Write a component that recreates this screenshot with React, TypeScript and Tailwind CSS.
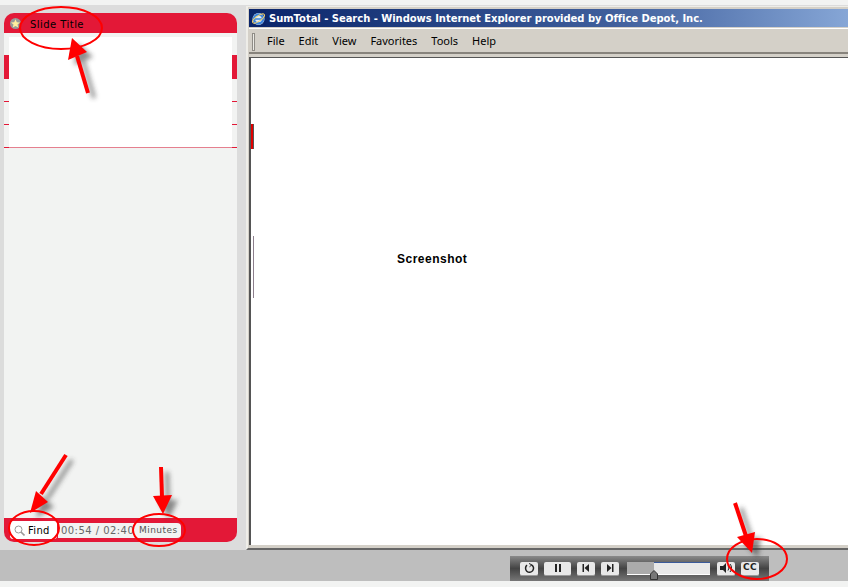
const arrows = [
  { line: '88,93 77,56', head: '72,38 68,60 87,52' },
  { line: '66,455 41,494', head: '30,513 36,491 48,502' },
  { line: '161,467 162,497', head: '163,514 153,496 172,495' },
  { line: '735,503 746,536', head: '752,553 737,537 755,532' },
];

function Annotations() {
  return (
    <svg className="absolute left-0 top-0 pointer-events-none" width="848" height="587">
      <defs>
        <filter id="soft" x="-50%" y="-50%" width="200%" height="200%">
          <feGaussianBlur stdDeviation="2.5" />
        </filter>
      </defs>
      {arrows.map((a) => (
        <g key={a.line} transform="translate(6 5)" filter="url(#soft)" opacity="0.55">
          <polyline points={a.line} stroke="#333" strokeWidth="4" fill="none" />
          <polygon points={a.head} fill="#333" />
        </g>
      ))}
      {arrows.map((a) => (
        <g key={a.head}>
          <polyline points={a.line} stroke="#ff0000" strokeWidth="4" fill="none" />
          <polygon points={a.head} fill="#ff0000" />
        </g>
      ))}
      <g fill="none" stroke="#ff0000" strokeWidth="2">
        <ellipse cx="61" cy="28" rx="41" ry="21" />
        <ellipse cx="34" cy="528" rx="25" ry="17" />
        <ellipse cx="159" cy="530" rx="26" ry="16" />
        <ellipse cx="757" cy="559" rx="30" ry="20" />
      </g>
    </svg>
  );
}

function PlayerButton({ w, children }: { w: string; children: React.ReactNode }) {
  return (
    <div className={`${w} h-[14px] rounded-[2px] bg-[#e8e8e8] border-b border-[#999] flex items-center justify-center`}>
      {children}
    </div>
  );
}

function EdgeMark({ top, h }: { top: string; h: string }) {
  return (
    <div className={`absolute left-0 right-0 ${top} ${h} flex justify-between`}>
      <div className="w-[5px] bg-[#e31837]" />
      <div className="w-[5px] bg-[#e31837]" />
    </div>
  );
}

function SidePanel() {
  return (
    <div className="w-[233px] ml-1 mt-2 flex flex-col font-['DejaVu_Sans',sans-serif]">
      <div className="h-5 bg-[#e31837] rounded-t-[10px] flex items-center pl-[6px] gap-[9px]">
        <svg width="11" height="11" viewBox="0 0 11 11">
          <circle cx="5.5" cy="5.5" r="5.5" fill="#999" />
          <polygon points="5.5,1.2 6.8,4.2 10,4.5 7.5,6.5 8.3,9.6 5.5,8 2.7,9.6 3.5,6.5 1,4.5 4.2,4.2" fill="#ffef9e" />
        </svg>
        <span className="text-[10px] tracking-[0.45px] text-black pt-[3px]">Slide Title</span>
      </div>
      <div className="h-[115px] bg-[#f2f3f2] flex flex-col pt-1 relative">
        <div className="mx-[5px] flex-1 bg-white" />
        <EdgeMark top="top-[22px]" h="h-6" />
        <EdgeMark top="top-[68px]" h="h-px" />
        <EdgeMark top="top-[91px]" h="h-px" />
        <div className="h-px bg-[#e5808f] flex justify-between">
          <div className="w-[5px] bg-[#e31837]" />
          <div className="w-[5px] bg-[#e31837]" />
        </div>
      </div>
      <div className="flex-1 bg-[#f2f3f2]" />
      <div className="h-6 bg-[#e31837] rounded-b-[10px] flex items-center pl-[6px]">
        <div className="w-[47px] h-[18px] bg-white rounded-[3px] flex items-center pl-1 gap-[3px]">
          <svg width="11" height="11" viewBox="0 0 11 11" fill="none" stroke="#999" strokeWidth="1">
            <circle cx="4.5" cy="4.5" r="3.5" />
            <path d="M7 7l3.5 3.5" strokeWidth="1.6" />
          </svg>
          <span className="text-[10px] text-black tracking-[0.3px] pt-[1px]">Find</span>
        </div>
        <div className="ml-[1px] w-[77px] h-[15px] bg-[#f2f3f2] flex items-center pl-[3px] pt-[1px] text-[10px] text-[#666] tracking-[0.45px] overflow-hidden whitespace-nowrap">
          00:54 / 02:40
        </div>
        <div className="w-[46px] h-[15px] bg-[#f2f3f2] rounded-r-[4px] flex items-center pl-1 pt-[2px] text-[9px] text-[#555] tracking-[0.45px]">
          Minutes
        </div>
      </div>
    </div>
  );
}

function BrowserWindow() {
  return (
    <div className="flex-1 ml-[9px] mt-[1px] min-w-0 flex flex-col bg-[#d4d0c8] border-l-2 border-t border-b-2 border-l-[#eeede8] border-t-[#eeede8] border-b-[#666] pl-[1px] pt-[1px] pb-[3px] relative">
      <div className="h-[18px] mt-[1px] bg-gradient-to-r from-[#0a246a] via-[#3f5e9b] via-60% to-[#86a6d6] flex items-center pl-[1px] gap-[3px]">
        <div className="w-[16px] h-[16px] bg-[#0a246a] flex items-center justify-center">
          <svg width="15" height="15" viewBox="0 0 15 15">
            <circle cx="7.5" cy="8" r="6" fill="#dfeaf8" />
            <ellipse cx="7.5" cy="8" rx="4.5" ry="4.5" fill="none" stroke="#3c83dc" strokeWidth="2.4" />
            <path d="M3 8h9" stroke="#3c83dc" strokeWidth="1.5" />
            <ellipse cx="7.5" cy="7.5" rx="7" ry="2.6" fill="none" stroke="#f2d16b" strokeWidth="1" transform="rotate(-35 7.5 7.5)" />
          </svg>
        </div>
        <span className="text-[10px] font-bold text-white font-['DejaVu_Sans',sans-serif] tracking-[-0.04px] whitespace-nowrap">
          SumTotal - Search - Windows Internet Explorer provided by Office Depot, Inc.
        </span>
      </div>
      <div className="h-[26px] mt-[1px] flex items-center border-t border-white border-b-2 border-b-[#87837c] pl-[3px] pt-[2px] text-[11px] text-black font-['Noto_Sans',sans-serif]">
        <div className="w-[3px] h-[18px] border border-[#8f8c86] bg-[#ecebe6] mr-[12px]" />
        <div className="flex gap-[14px]">
          <span>File</span>
          <span>Edit</span>
          <span>View</span>
          <span>Favorites</span>
          <span>Tools</span>
          <span>Help</span>
        </div>
      </div>
      <div className="mt-[3px] flex-1 bg-white border-l-2 border-t border-[#555] relative flex">
        <div className="flex flex-col pt-[66px]">
          <div className="w-[3px] h-[25px] bg-[#e00000] border-r border-[#555]" />
          <div className="w-[3px] h-[62px] mt-[87px] border-r border-[#8d7f8d]" />
        </div>
        <div className="flex-1 pl-[143px] pt-[193px] text-xs font-bold text-black font-['Liberation_Sans',sans-serif] tracking-[0.5px]">
          Screenshot
        </div>
      </div>
    </div>
  );
}

function Player() {
  return (
    <div className="w-[259px] h-[25px] ml-[510px] bg-gradient-to-b from-[#8a8a8a] via-[#444] to-[#777] flex items-center pl-[10px] relative">
      <div className="flex items-center">
        <PlayerButton w="w-[18px]">
          <svg width="11" height="11" viewBox="0 0 11 11" fill="none" stroke="#222" strokeWidth="1.5">
            <path d="M7.5 1.8A4 4 0 1 1 3 2.2" />
            <path d="M5 0.5 7.8 1.8 5.5 3.8" strokeWidth="1" />
          </svg>
        </PlayerButton>
        <div className="w-[6px]" />
        <PlayerButton w="w-[27px]">
          <svg width="6" height="8" viewBox="0 0 6 8" fill="#222">
            <rect x="0" y="0" width="2" height="8" />
            <rect x="4" y="0" width="2" height="8" />
          </svg>
        </PlayerButton>
        <div className="w-[6px]" />
        <PlayerButton w="w-[18px]">
          <svg width="8" height="8" viewBox="0 0 8 8" fill="#222">
            <rect x="0.5" y="0" width="1.5" height="8" />
            <polygon points="7,0 7,8 2.5,4" />
          </svg>
        </PlayerButton>
        <div className="w-[6px]" />
        <PlayerButton w="w-[18px]">
          <svg width="8" height="8" viewBox="0 0 8 8" fill="#222">
            <polygon points="1,0 1,8 5.5,4" />
            <rect x="6" y="0" width="1.5" height="8" />
          </svg>
        </PlayerButton>
      </div>
      <div className="ml-2 w-[83px] h-[13px] flex relative">
        <div className="w-[27px] bg-[#ababab] border-b border-white" />
        <div className="flex-1 bg-[#e8e8e8] border-t border-[#3a5a9a] border-b border-b-white" />
        <svg className="absolute left-[23px] top-[8px]" width="8" height="10" viewBox="0 0 8 10">
          <path d="M0.5 9.5V4L4 0.5 7.5 4V9.5Z" fill="#777" stroke="#333" strokeWidth="1" />
        </svg>
      </div>
      <div className="ml-[7px]">
        <PlayerButton w="w-[18px]">
          <svg width="14" height="12" viewBox="0 0 14 12" fill="none">
            <polygon points="1,4 4,4 7,1 7,11 4,8 1,8" fill="#222" />
            <path d="M9 3.5a4 4 0 0 1 0 5M11 2a6 6 0 0 1 0 8" stroke="#222" strokeWidth="1" />
          </svg>
        </PlayerButton>
      </div>
      <div className="ml-[6px]">
        <PlayerButton w="w-[18px]">
          <span className="text-[9px] font-bold text-[#222] tracking-[0.5px] font-['DejaVu_Sans',sans-serif]">CC</span>
        </PlayerButton>
      </div>
    </div>
  );
}

export default function App() {
  return (
    <div className="relative w-[848px] h-[587px] overflow-hidden bg-[#f2f3f2]">
      <div className="h-[5px]" />
      <div className="h-[545px] bg-[#dcdcdc] flex pb-2">
        <SidePanel />
        <div className="flex-1 min-w-0 flex -mb-2">
          <BrowserWindow />
        </div>
      </div>
      <div className="h-[31px] bg-[#bebebe] pt-[6px]">
        <Player />
      </div>
      <Annotations />
    </div>
  );
}
